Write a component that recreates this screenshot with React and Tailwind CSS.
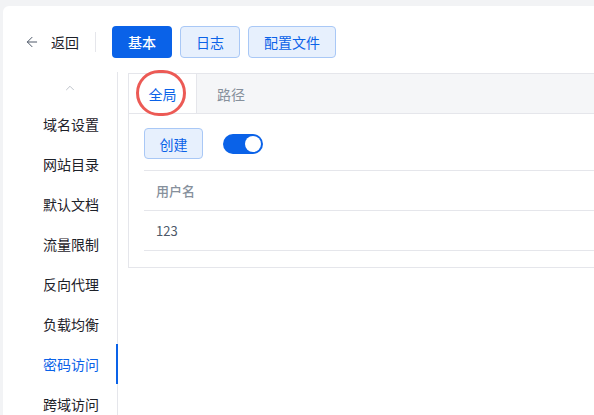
import React from 'react';
import { ArrowLeft, ChevronUp } from 'lucide-react';

const menu = ['域名设置', '网站目录', '默认文档', '流量限制', '反向代理', '负载均衡', '密码访问', '跨域访问'];

const App = () => {
  return (
    <div
      className="h-[415px] w-[594px] overflow-hidden bg-[#f2f3f5] pl-[3px] pt-[6px]"
      style={{ fontFamily: '"Noto Sans CJK SC", "Noto Sans", sans-serif' }}
    >
      <div className="h-[420px] w-[680px] rounded-tl-md bg-white pt-5">
        {/* Top bar */}
        <div className="flex h-8 items-center pl-[21px]">
          <div className="flex items-center gap-[11px] text-sm text-[#1d2129]">
            <ArrowLeft className="h-4 w-4 text-[#4e5969]" strokeWidth={1.5} />
            <span>返回</span>
          </div>
          <div className="ml-[16px] h-5 w-px bg-[#e5e6eb]" />
          <div className="ml-[16px] flex gap-2">
            <button className="h-8 w-[60px] rounded-[4px] bg-[#0a62e8] text-sm font-medium text-white">基本</button>
            <button className="h-8 w-[60px] rounded-[4px] border border-[#a9c8f6] bg-[#e7f0fd] text-sm text-[#0a62e8]">日志</button>
            <button className="h-8 w-[88px] rounded-[4px] border border-[#a9c8f6] bg-[#e7f0fd] text-sm text-[#0a62e8]">配置文件</button>
          </div>
        </div>

        <div className="mt-[14px] flex">
          {/* Side menu */}
          <div className="w-[115px] shrink-0 border-r border-[#e5e6eb]">
            <div className="flex h-8 items-center justify-end pr-[40px]">
              <ChevronUp className="h-3.5 w-3.5 text-[#b5bac2]" strokeWidth={1.5} />
            </div>
            {menu.map((m) => {
              const active = m === '密码访问';
              return (
                <div
                  key={m}
                  className={
                    active
                      ? 'relative -mr-px flex h-10 items-center justify-end border-r-2 border-[#0a62e8] pr-[17px] text-sm text-[#0a62e8]'
                      : 'flex h-10 items-center justify-end pr-[18px] text-sm text-[#1d2129]'
                  }
                >
                  {m}
                </div>
              );
            })}
          </div>

          {/* Content panel */}
          <div className="relative ml-[10px] mt-px shrink-0 self-start">
            <div className="w-[500px] border border-[#e5e6eb]">
              <div className="flex h-10 border-b border-[#e5e6eb] bg-[#f5f6f8]">
                <div className="flex w-[68px] items-center justify-center border-r border-[#e5e6eb] bg-white text-sm text-[#0a62e8]">全局</div>
                <div className="flex w-[68px] items-center justify-center text-sm text-[#86909c]">路径</div>
              </div>
              <div className="px-[15px] pb-4 pt-[14px]">
                <div className="flex items-center">
                  <button className="h-[31px] w-[59px] rounded-[4px] border border-[#a9c8f6] bg-[#e7f0fd] text-sm text-[#0a62e8]">创建</button>
                  <div className="ml-5 flex h-5 w-10 items-center justify-end rounded-full bg-[#0a62e8] pr-[2px]">
                    <div className="h-4 w-4 rounded-full bg-white" />
                  </div>
                </div>
                <div className="mt-[11px] border-t border-[#e5e6eb]">
                  <div className="flex h-10 items-center border-b border-[#e5e6eb] pl-3 text-[13px] font-medium text-[#86909c]">用户名</div>
                  <div className="flex h-10 items-center border-b border-[#e5e6eb] pl-3 text-[13px] text-[#4e5969]">123</div>
                </div>
              </div>
            </div>
            {/* annotation ring */}
            <div className="pointer-events-none absolute left-[8px] top-[-3px] h-[46px] w-[50px] rounded-full border-[3px] border-[#ec5a55]" />
          </div>
        </div>
      </div>
    </div>
  );
};

export default App;
